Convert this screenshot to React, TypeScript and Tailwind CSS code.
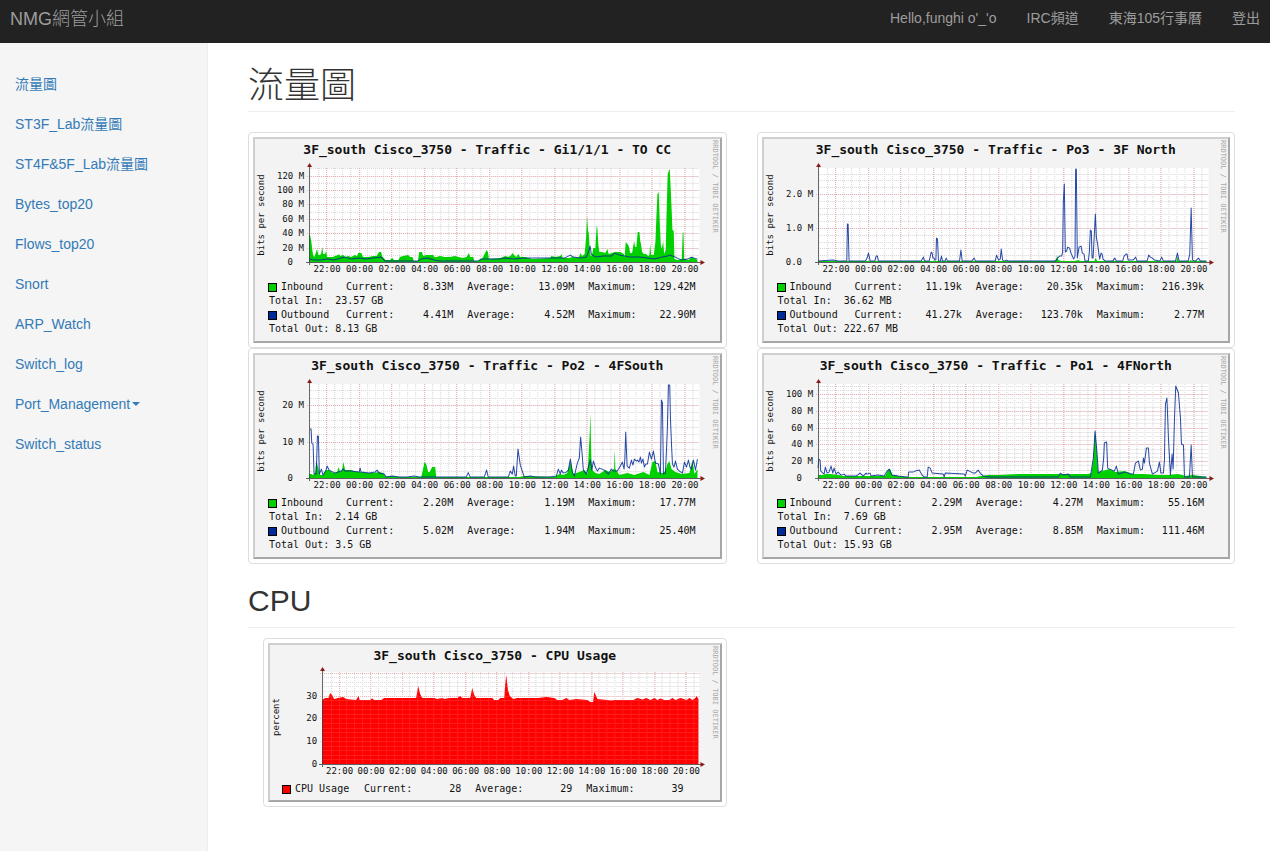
import React from "react";

type Stat = [label: string, value: string];
type Series = { name: string; swatch: string; stats: Stat[]; total?: string };
type Axis = {
  unit: string;
  // Label text, height above the baseline
  labels: [text: string, height: number][];
  minorStep: number;
  majorStep: number;
  labelEnd: number;
  zeroEnd: number;
};
type Frame = {
  width: number;
  height: number;
  left: number;
  base: number;
  plotWidth: number;
  plotHeight: number;
  firstHour: number;
  hourStep: number;
};
type Graph = {
  title: string;
  frame: Frame;
  axis: Axis;
  area: string;
  areaColor: string;
  line?: string;
  overlayGrid?: boolean;
};

const HOURS = ["22:00", "00:00", "02:00", "04:00", "06:00", "08:00", "10:00", "12:00", "14:00", "16:00", "18:00", "20:00"];

const TRAFFIC_FRAME: Frame = {
  width: 464, height: 120, left: 54, base: 102, plotWidth: 390, plotHeight: 94, firstHour: 17, hourStep: 32.5,
};
const CPU_FRAME: Frame = {
  width: 449, height: 116, left: 52, base: 98, plotWidth: 377, plotHeight: 92, firstHour: 16.5, hourStep: 31.5,
};

const trafficAxis = (
  labels: [string, number][],
  minorStep: number,
  majorStep: number,
): Axis => ({ unit: "bits per second", labels, minorStep, majorStep, labelEnd: 49, zeroEnd: 38 });

function toPoints(data: string, frame: Frame): string {
  return data
    .trim()
    .split(/\s+/)
    .map((pair) => {
      const [x, h] = pair.split(",").map(Number);
      return `${(frame.left + x).toFixed(1)},${(frame.base - h).toFixed(1)}`;
    })
    .join(" ");
}

function steps(start: number, step: number, end: number): number[] {
  const out: number[] = [];
  for (let v = start; v <= end; v += step) out.push(v);
  return out;
}

function Plot({ graph }: { graph: Graph }) {
  const { frame, axis } = graph;
  const { left, base, plotWidth, plotHeight } = frame;
  const top = base - plotHeight;
  const right = left + plotWidth;
  const quarter = frame.hourStep / 4;
  const minorX = steps(frame.firstHour - quarter, quarter, plotWidth);
  const majorX = HOURS.map((_, i) => frame.firstHour + i * frame.hourStep);
  const minorY = steps(axis.minorStep, axis.minorStep, plotHeight);
  const majorY = steps(axis.majorStep, axis.majorStep, plotHeight);
  const last = graph.area.trim().split(/\s+/).pop()!.split(",")[0];

  const minorPath =
    minorX.map((x) => `M${Math.round(left + x) + 0.5} ${top}V${base}`).join("") +
    minorY.map((y) => `M${left} ${Math.round(base - y) + 0.5}H${right}`).join("");
  const majorPath =
    majorX.map((x) => `M${Math.round(left + x) + 0.5} ${top}V${base + 2}`).join("") +
    majorY.map((y) => `M${left - 2} ${Math.round(base - y) + 0.5}H${right}`).join("");

  return (
    <svg viewBox={`0 0 ${frame.width} ${frame.height}`} className="block w-full font-['DejaVu_Sans_Mono',monospace] text-[9px]" role="img" aria-label={graph.title}>
      <rect x={left} y={top} width={plotWidth} height={plotHeight} fill="#fff" />
      <path d={minorPath} stroke="#9a8a94" strokeOpacity="0.36" strokeDasharray="1 1" fill="none" />
      <path d={majorPath} stroke="#e88888" strokeOpacity="0.55" strokeDasharray="1 1" fill="none" />
      <polygon points={`${left},${base} ${toPoints(graph.area, frame)} ${left + Number(last)},${base}`} fill={graph.areaColor} />
      {graph.overlayGrid && <path d={minorPath} stroke="#fff" strokeOpacity="0.11" fill="none" />}
      {graph.line && (
        <polyline points={toPoints(graph.line, frame)} fill="none" stroke="#002a97" strokeOpacity="0.85" strokeWidth="1" strokeLinejoin="round" />
      )}
      <path d={`M${left + 0.5} ${top - 1}V${base + 3}M${left - 3} ${base + 0.5}H${right + 3}`} stroke="#3a3a3a" strokeOpacity="0.8" fill="none" />
      <path d={`M${left - 2} ${top - 1}h5l-2.5 -4zM${right + 1} ${base - 2}v5l4.5 -2.5z`} fill="#8a1a1a" />
      {axis.labels.map(([text, h]) => (
        <text key={text} x={h === 0 ? axis.zeroEnd : axis.labelEnd} y={Math.round(base - h) + 3} textAnchor="end" fill="#111">
          {text}
        </text>
      ))}
      {HOURS.map((hour, i) => (
        <text key={hour} x={left + majorX[i] + 1} y={base + 10} textAnchor="middle" fill="#111">
          {hour}
        </text>
      ))}
      <text transform={`translate(9 ${base - 47}) rotate(-90)`} textAnchor="middle" fill="#111">
        {axis.unit}
      </text>
    </svg>
  );
}

function SeriesRow({ series, nameClass, gapClass }: { series: Series; nameClass: string; gapClass: string }) {
  return (
    <>
      <div className={`flex ${gapClass}`}>
        <div className={`flex shrink-0 items-center gap-1 ${nameClass}`}>
          <span className={`size-[9px] border border-black ${series.swatch}`} />
          {series.name}
        </div>
        <div className={`flex flex-1 ${gapClass}`}>
          {series.stats.map(([label, value]) => (
            <div key={label} className="flex flex-1 justify-between">
              <span>{label}</span>
              <span>{value}</span>
            </div>
          ))}
        </div>
      </div>
      {series.total && <div className="pl-px whitespace-pre">{series.total}</div>}
    </>
  );
}

function GraphCard({ graph, series, legendClass, nameClass }: { graph: Graph; series: Series[]; legendClass: string; nameClass: string }) {
  return (
    <a href="#graph" className="block rounded border border-[#ddd] bg-white p-1">
      <figure className="relative border-2 border-t-[#cfcfcf] border-r-[#a6a6a6] border-b-[#a6a6a6] border-l-[#cfcfcf] bg-[#f3f3f3] font-['DejaVu_Sans_Mono',monospace] text-[#111]">
        <figcaption className="text-center text-[13px] leading-[21px] font-bold whitespace-nowrap text-[#111]">{graph.title}</figcaption>
        <Plot graph={graph} />
        <div className={`text-[10px] leading-[14px] ${legendClass}`}>
          {series.map((s) => (
            <SeriesRow key={s.name} series={s} nameClass={nameClass} gapClass="gap-[14px]" />
          ))}
        </div>
        <span className="absolute top-px right-px text-[7px] leading-[9px] whitespace-nowrap text-[#a8a8a8] [writing-mode:vertical-rl]">
          RRDTOOL / TOBI OETIKER
        </span>
      </figure>
    </a>
  );
}

const traffic = (
  inbound: [string, string, string, string],
  outbound: [string, string, string, string],
): Series[] => [
  {
    name: "Inbound",
    swatch: "bg-[#00cf00]",
    stats: [["Current:", inbound[0]], ["Average:", inbound[1]], ["Maximum:", inbound[2]]],
    total: `Total In:  ${inbound[3]}`,
  },
  {
    name: "Outbound",
    swatch: "bg-[#002a97]",
    stats: [["Current:", outbound[0]], ["Average:", outbound[1]], ["Maximum:", outbound[2]]],
    total: `Total Out: ${outbound[3]}`,
  },
];

const TRAFFIC_GRAPHS: { graph: Graph; series: Series[] }[] = [
  {
    graph: {
      title: "3F_south Cisco_3750 - Traffic - Gi1/1/1 - TO CC",
      frame: TRAFFIC_FRAME,
      axis: trafficAxis([["120 M", 86.4], ["100 M", 72], ["80 M", 57.6], ["60 M", 43.2], ["40 M", 28.8], ["20 M", 14.4], ["0", 0]], 7.2, 14.4),
      areaColor: "#00cf00",
      area: `0,27 1,27 2.3,20 3,14 4,7 5.3,5 6.7,9 8,13 9.3,7 10.7,7 12,8 13.3,15 14,8 16,8 17,11 18,5 21.3,5 24,5 26,6 29,7 30,8 31,6 34,7 36,5 39,6 42,5 45.7,7 48,6 49,9 52.3,9 54,5 59,5 64,6 67.3,6 70,10 72,10 73.3,5 74.7,4 76,2 80.7,2 83.3,4 84.7,2 89.3,2 90.7,5 94,6 99,7 101,5 103.3,5 104.7,1 108.7,1 110,10 112.7,10 114,6 117,7 120.7,7 124,7 125.3,5 127.3,5 130.7,6 135.7,5 140.7,5 145.7,6 149,5 154,4 157.3,5 159.7,9 161,5 164,5 165,1 169.3,1 170.7,3 173.3,4 175.3,8 177.3,12 178.7,10 179.7,3 191,4 196,6 198.7,5 201,6 203.3,9 204.7,7 207,5 209,8 210.7,5 216,5 222.7,3 241,4 242,6 246,5 251,6 252.3,8 253,4 259.3,4 263.3,5 269.3,4 271.3,9 272.7,6 275.3,8 276.7,24 277.7,46 278.7,31 279.3,30 280.3,14 281.3,6 282.7,7 284,14 286,14 287.3,36 288,34 289,17 290,10 292.7,10 296,9 298,13 299.3,8 302.7,9 306,10 311,10 314.3,8 315.3,5 316.3,20 318.7,17 319.7,15 320.7,9 322.7,9 324.7,21 325.7,15 327,15 328.3,30 330,30 330.7,22 331.7,17 332.7,10 334.3,8 336.7,8 338.7,6 340,7 340.7,18 341.7,7 344.3,7 346,20 347,46 348,68 349.3,70 350.3,40 351.3,18 352.3,13 353.7,21 354.7,8 356.3,12 357.3,55 358.3,88 359.7,92 360.3,93 361.3,72 362.3,50 363,32 364.3,31 365,3 368,2 372.3,3 373.3,30 374,29 374.7,3 379,2 382,5 384.3,4 388,2`,
      line: `0,3 5,2 12,2 18,3 25,2 32,4 36,5 42,3 50,4 56,3 64,4 72,5 76,1 90,1 108,1 112,3 118,4 125,2 130,1 168,1 173,3 178,3 186,3 190,3 196,4 205,3 215,4 240,4 255,4 261,7 264,5 272,4 277,5 279,10 280.7,16 282,8 286,5 294,6 302,6 305,9 310,7 320,5 330,5 345,3 353,5 358,6 360,7 366,5 372,2 378,3 382,5 388,3`,
    },
    series: traffic(["8.33M", "13.09M", "129.42M", "23.57 GB"], ["4.41M", "4.52M", "22.90M", "8.13 GB"]),
  },
  {
    graph: {
      title: "3F_south Cisco_3750 - Traffic - Po3 - 3F North",
      frame: TRAFFIC_FRAME,
      axis: trafficAxis([["2.0 M", 68], ["1.0 M", 34], ["0.0", 0]], 6.8, 34),
      areaColor: "#00cf00",
      area: `0,1 236,1 238,2 238.7,7 240,2 243,1 256,1 260,2 262,1 270,1 276,1 277,4 279,1 288,1 358,1 359,6 360,1 371,1 372,2 374,1 388,1`,
      line: `0,1 15,2 20,1 28.7,1 29.3,38 30,38 31,1 47.3,1 49,4 50.3,9 51.3,5 52,1 56.7,1 58,6 59.3,6 60.3,1 103,1 105.3,5 106.3,1 111,1 113,10 114,9 114.7,4 116,4 116.7,2 117.7,2 118.3,24 119.3,23 120.3,1 122,1 123.3,6 124.3,1 126.7,1 128,4 129.3,1 141.3,1 142.7,12 144,1 153.3,1 156,4 157.3,1 177,1 178.3,7 180.3,2 182,3 183,13 184.3,2 186.3,1 188,2 190,1 225.3,1 237,1 239.3,4 241.3,6 243.3,6 244.3,10 245,60 246,78 247,10 248.3,11 249.3,15 251.3,14 252.3,10 254,6 255.3,3 256.7,6 257.3,93 258,93 259,4 260.7,15 262.7,16 264,9 265.7,8 266.7,1 270,1 271,10 272,32 273,31 273.7,4 274.7,4 276,28 277,48 278,25 279.3,18 280.3,10 281.3,3 282.7,9 283.7,8 284.7,3 287,1 294.3,1 296.3,4 298,1 304.3,1 305.7,6 307.7,8 308.7,8 309.7,2 314.7,2 317.3,5 318.7,1 328.7,1 330.3,7 332,5 334,4 336,2 341.3,1 343.3,5 345,1 357,1 359,9 360.7,1 369.7,1 371.3,8 372.7,54 374,2 377,1 380,4 382,1 388,1`,
    },
    series: traffic(["11.19k", "20.35k", "216.39k", "36.62 MB"], ["41.27k", "123.70k", "2.77M", "222.67 MB"]),
  },
  {
    graph: {
      title: "3F_south Cisco_3750 - Traffic - Po2 - 4FSouth",
      frame: TRAFFIC_FRAME,
      axis: trafficAxis([["20 M", 73], ["10 M", 36.5], ["0", 0]], 7.3, 36.5),
      areaColor: "#00cf00",
      area: `0,4 2,4 4,3 6,5 7.3,17 9,11 11,3 14,3 17,8 20,8 24,5 28,6 29.5,11 31,6 33,8 34.3,16 36,8 42,8 47,6 52,6 58,5 64,5 70,6 74,5 76,1.5 83,2 90,1 112,1 113.5,7 115.3,16 117,14 119,6 120.5,6 123,11 126,11 127,1 176,1 205,1 210,1 215,2 245,1 250,4 254,3 258,5 261,16 262,13 264,4 270,6 275,8 278,4 279,18 280.3,43 281,65 282,20 283,8 286,5 290,4 296,8 300,6 303,8 304.7,9 305.3,28 306,9 310,3 318,5 325,3 334,6 340,3 343,16 346,17 348,6 353,5 356,7 358,14 360,17 362,9 366,6 372,4 380,5 383,18 385,4 388,9`,
      line: `0.7,49 2,49 2.7,35 4,34 5,4 7,4 7.7,20 8.3,42 9.3,42 10.3,4 12.3,9 14,3 17,8 18,12 20,8 26,5 32,7 34,9 36,7 42,7 50,6 51,10 52,6 60,5 66,6 68,8 70,5 75,4 77,1 83,2 90,1 98,1 105,2 110,1 120,1 140,1 150,1 157,1 159,5.5 161,1 175,1 177.3,8 179,1 199,1 201,7 203,4 204.3,12 206,2 207,2 208.7,29 210,20 211,13 213,7 215,1 221,2 226,1 240,1 247,2 249,9 251,4 252,8 254,5 257,6 259,8 261,19 263,6 265,2 268,15 270,20 271.3,41 272.7,25 274,8 277,4 281,18 282.5,8 284,17 286,11 288,7 290,10 295,8 299,4 302,9 304,7 308,7 311,12 313,16 314.7,9 315.5,20 316.3,46 317.7,12 320,10 322,18 323.5,13 325,19 327,17 328,18 329.5,16 331,21 332,15 333.5,19 335,11 336.5,14 338,14 340,26 342,19 344,27 346,15 349,14 351,4 352,78 353,75 354,4 356,5 357,27 358,52 359,93 360.3,93 361,60 362,35 363,14 364.5,11 366,17 368,9 370,7 373,5 375,16 377,11 379,18 380.5,11 382,9 384,18 386,8 388,19`,
    },
    series: traffic(["2.20M", "1.19M", "17.77M", "2.14 GB"], ["5.02M", "1.94M", "25.40M", "3.5 GB"]),
  },
  {
    graph: {
      title: "3F_south Cisco_3750 - Traffic - Po1 - 4FNorth",
      frame: TRAFFIC_FRAME,
      axis: trafficAxis([["100 M", 84], ["80 M", 67.2], ["60 M", 50.4], ["40 M", 33.6], ["20 M", 16.8], ["0", 0]], 4.2, 16.8),
      areaColor: "#00cf00",
      area: `0,3 5,3 8,4 12,4 20,3 26,2 60,2 67,2 70,8 72,9 74,3 80,2 90,1 158,1 163,2 170,3 180,3 200,4 230,4 270,4 273,5 275,18 276.7,47 278,34 279.7,6 284,7 291,9 297,6 306,7 314,4 325,4 340,3 350,3 359,4 364,3 366,2 375,3 388,1`,
      line: `0,10 0.7,19 2,18 2.7,7 6,4 7.3,11 9,5 11,6 13,12 14.7,5 16,10 18,4 20,6 23,3 26,4 28,2 38,2 42,5 45,2 48,5 49,4 52,5 53,2 60,3 66,2 69,7 71,9 74,3 80,2 88,1 90,1 90.5,6 95,6 97,7 101,8 104,3 106,1 109,1 110,11 112,10 114,5 125,4 126,1 127,5 146,4 147,2 149,8 155,5 157,5 160,8 162,5 165,2 170,1 240,1 242,5 245,3 250,4 252,1 272,1 275,20 276.7,47 278.7,25 280,5 284,8 285.3,20 286,35 288.3,36 289.3,10 296,7 298,12 300,4 307,6 313,4 315,4 317,15 320,17 322,8 324,9 325,20 326,15 328,30 330,30 331,15 334,4 339,7 341,16 342.5,5 345,5 346,18 347,74 348.5,80 350,40 352,3 353.7,24 354.7,9 356,58 357.3,92 360,85 362,60 363,34 365,33 366,1 371,1 372.7,33 374,1 388,1`,
    },
    series: traffic(["2.29M", "4.27M", "55.16M", "7.69 GB"], ["2.95M", "8.85M", "111.46M", "15.93 GB"]),
  },
];

const CPU_GRAPH: Graph = {
  title: "3F_south Cisco_3750 - CPU Usage",
  frame: CPU_FRAME,
  axis: { unit: "percent", labels: [["30", 68.4], ["20", 45.6], ["10", 22.8], ["0", 0]], minorStep: 4.56, majorStep: 22.8, labelEnd: 47, zeroEnd: 47 },
  areaColor: "#ff0000",
  overlayGrid: true,
  area: `0,64 3,66 6.5,66 8,71 10,69 12,65 16,66 21,67 24,65 34,64 36.5,68 37.5,64 48,64 50,65.5 52,64 59,64 62,66 94,66 96,78 98,70 100,66 112,66 115,65 120,66 122,65 127,66 135,66 138,68 140,66 148,66 150,76 152,69 154,66 170,66 172,64 176,64 178,66 182,66 183,80 184,89 185.7,74 187.5,68 191,65 195,66 216,66 224,67 232,66 235,64 240,64 244,66 247,64 254,65 265,64 268,62 270.7,62 272,72 275,65 285,64 289,63.5 292,64 311,64 315,66 320,64.5 324,66 328,64 332,66 335,64 338,65.5 342,64 347,64 350,66 353,64 358,66 364,64 367,66 370,64 373,66 374,68 376,65`,
};

const CPU_SERIES: Series[] = [
  { name: "CPU Usage", swatch: "bg-[#ff0000]", stats: [["Current:", "28"], ["Average:", "29"], ["Maximum:", "39"]] },
];

const SIDEBAR = ["流量圖", "ST3F_Lab流量圖", "ST4F&5F_Lab流量圖", "Bytes_top20", "Flows_top20", "Snort", "ARP_Watch", "Switch_log", "Port_Management", "Switch_status"];
const NAV = ["Hello,funghi o'_'o", "IRC頻道", "東海105行事曆", "登出"];

export default function App() {
  return (
    <div className="flex min-h-screen flex-col bg-white font-['Liberation_Sans','Noto_Sans_CJK_TC',sans-serif] text-sm text-[#333]">
      <header className="flex h-[43px] shrink-0 items-start justify-between bg-[#222] px-[10px] text-[#9d9d9d]">
        <a href="#home" className="text-lg leading-[38px] font-light">NMG網管小組</a>
        <nav className="flex gap-[30px] leading-[36px]">
          {NAV.map((item) => (
            <a key={item} href="#nav">{item}</a>
          ))}
        </nav>
      </header>

      <div className="flex flex-1">
        <aside className="w-52 shrink-0 border-r border-[#eee] bg-[#f5f5f5] pt-[21px]">
          <ul>
            {SIDEBAR.map((item) => (
              <li key={item}>
                <a href="#section" className="flex h-10 items-center px-[15px] text-[#337ab7]">
                  {item}
                  {item === "Port_Management" && (
                    <span className="ml-0.5 border-x-4 border-t-4 border-x-transparent border-t-[#337ab7]" />
                  )}
                </a>
              </li>
            ))}
          </ul>
        </aside>

        <main className="min-w-0 flex-1 pt-[23px] pr-[35px] pb-10 pl-10">
          <h1 className="border-b border-[#eee] pb-[5px] text-4xl leading-[40px] font-light">流量圖</h1>
          <div className="mt-5 grid grid-cols-2 gap-x-[30px]">
            {TRAFFIC_GRAPHS.map(({ graph, series }) => (
              <GraphCard key={graph.title} graph={graph} series={series} legendClass="pr-6 pb-[5px] pl-[13px]" nameClass="w-16" />
            ))}
          </div>

          <h2 className="mt-5 border-b border-[#eee] pb-[10px] text-3xl leading-[33px]">CPU</h2>
          <div className="mt-[10px] grid grid-cols-2 gap-x-[30px]">
            <div className="pl-[15px]">
              <GraphCard graph={CPU_GRAPH} series={CPU_SERIES} legendClass="pr-9 pb-1 pl-3" nameClass="w-[68px]" />
            </div>
          </div>
        </main>
      </div>
    </div>
  );
}
